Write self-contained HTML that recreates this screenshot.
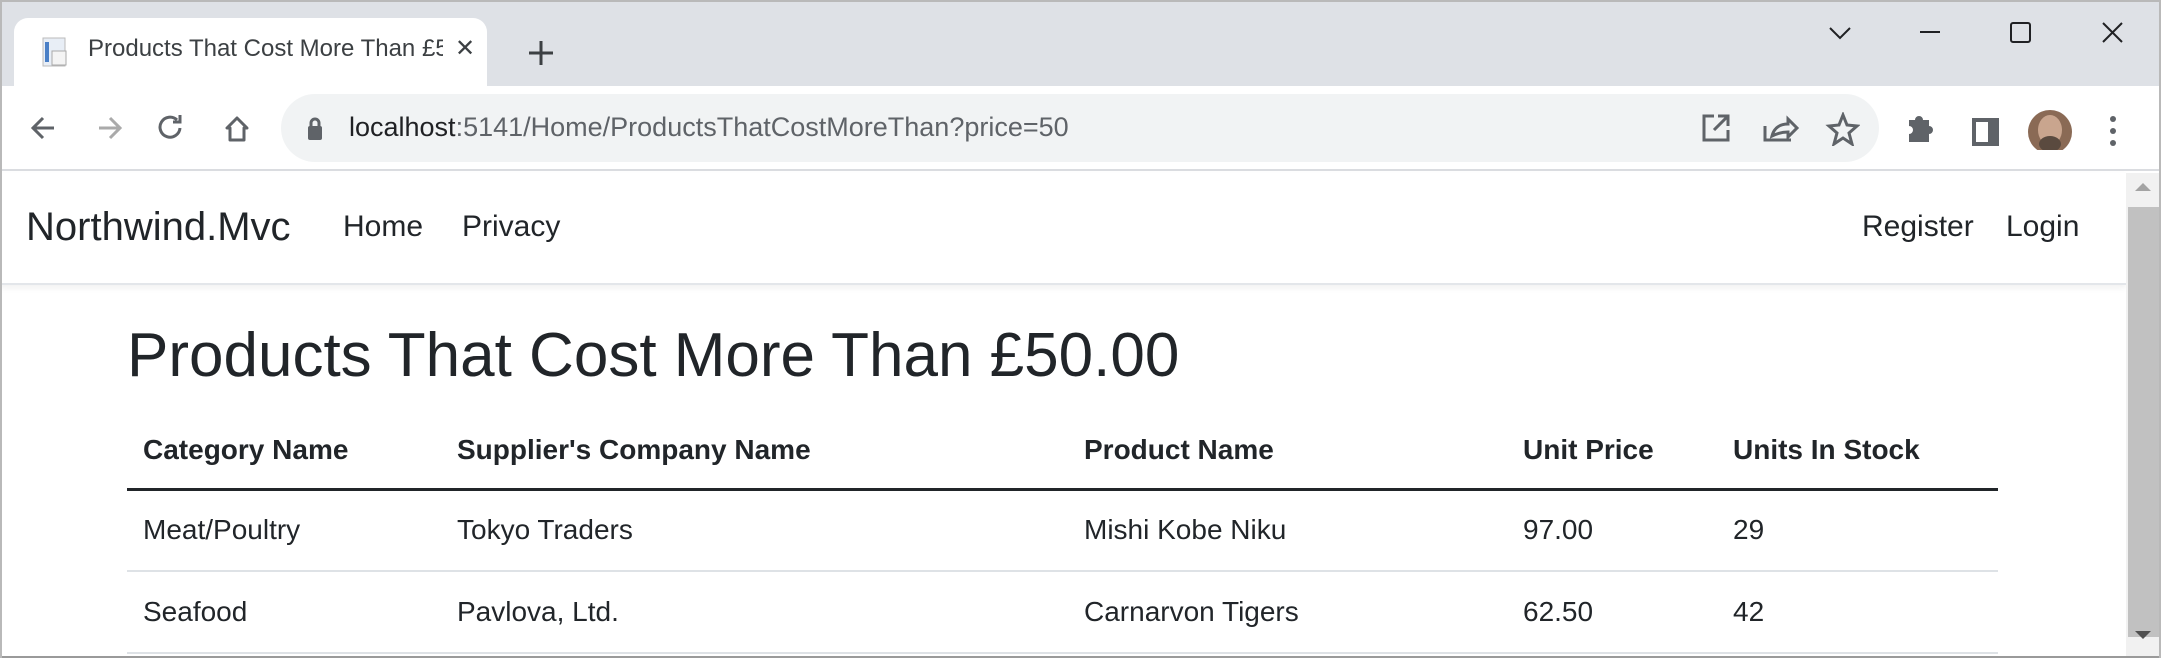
<!DOCTYPE html>
<html><head><meta charset="utf-8"><style>
*{margin:0;padding:0;box-sizing:border-box}
body{width:2161px;height:658px;overflow:hidden;background:#fff;font-family:"Liberation Sans",sans-serif;position:relative;color:#212529}
.abs{position:absolute}
#strip{left:0;top:0;width:2161px;height:86px;background:#dee1e6;border-top:2px solid #b9b9b9}
#tab{left:14px;top:18px;width:473px;height:68px;background:#fff;border-radius:14px 14px 0 0}
#toolbar{left:0;top:86px;width:2161px;height:85px;background:#fff;border-bottom:2px solid #dadce0}
#omni{left:281px;top:94px;width:1598px;height:68px;background:#f1f3f4;border-radius:34px}
#nav{left:0;top:173px;width:2126px;height:112px;background:#fff;border-bottom:2px solid #e3e6ea;box-shadow:0 3px 6px rgba(0,0,0,.06)}
#sb{left:2126px;top:173px;width:35px;height:485px;background:#f1f1f1}
.t{position:absolute;white-space:nowrap}
table{position:absolute;left:127px;top:412px;width:1871px;border-collapse:collapse;font-size:28px}
td,th{text-align:left;padding:0 0 0 16px;height:77px;vertical-align:middle}
th{font-weight:bold;border-bottom:3px solid #212529;height:77px}
td{border-bottom:2px solid #dee2e6;height:82px}
</style></head><body>
<div id="strip" class="abs"></div>
<div id="tab" class="abs"></div>
<svg class="abs" style="left:40px;top:36px" width="32" height="34"><rect x="3" y="2" width="22" height="28" fill="#e8eef6" stroke="#bbb"/><rect x="5" y="6" width="4" height="20" fill="#4a7fc6"/><rect x="12" y="15" width="14" height="14" fill="#f4f4f4" stroke="#aaa"/></svg>
<div class="t" style="left:88px;top:35px;font-size:24px;color:#3c4043;width:355px;overflow:hidden">Products That Cost More Than £5</div>
<div class="t" style="left:455px;top:34px;font-size:24px;color:#3c4043">✕</div>
<svg class="abs" style="left:526px;top:38px" width="30" height="30"><path d="M15 3v24M3 15h24" stroke="#3c4043" stroke-width="3"/></svg>
<svg class="abs" style="left:1820px;top:20px" width="320" height="30" fill="none" stroke="#202124" stroke-width="2"><path d="M10 8l10 10 10-10"/><path d="M100 12h20"/><rect x="191" y="3" width="19" height="19" rx="2"/><path d="M283 3l19 19M302 3l-19 19"/></svg>
<div id="toolbar" class="abs"></div>
<div id="omni" class="abs"></div>
<svg class="abs" style="left:28px;top:112px" width="240" height="32" fill="none" stroke-width="3"><path d="M26 16H6M15 6L5 16l10 10" stroke="#5f6368"/><path d="M71 16h20M82 6l10 10-10 10" stroke="#aaa"/><path d="M149 8a10 10 0 1 0 3 8" stroke="#5f6368"/><path d="M152 3v7h-7" stroke="#5f6368"/><path d="M209 6l-10 10h3v12h14V16h3z" stroke="#5f6368" stroke-linejoin="round"/></svg>
<svg class="abs" style="left:306px;top:116px" width="18" height="26"><rect x="2" y="10" width="14" height="14" rx="2" fill="#5f6368"/><path d="M5 11V7a4 4 0 0 1 8 0v4" stroke="#5f6368" stroke-width="3" fill="none"/></svg>
<div class="t" style="left:349px;top:112px;font-size:27px;color:#5f6368"><span style="color:#202124">localhost</span>:5141/Home/ProductsThatCostMoreThan?price=50</div>
<svg class="abs" style="left:1700px;top:112px" width="160" height="34" fill="none" stroke="#5f6368" stroke-width="3"><path d="M14 4H4v24h24V18M18 4h10v10M28 4L14 18"/><path d="M65 14v14h26M72 24c2-8 8-12 16-12V7l9 9-9 9v-5c-6 0-12 2-16 4z"/><path d="M143 3l4 10 10 1-8 7 3 11-9-6-9 6 3-11-8-7 10-1z"/></svg>
<svg class="abs" style="left:1905px;top:110px" width="180" height="40"><path d="M4 10h6a4 4 0 0 1 8 0h6v6a4 4 0 0 1 0 8v8H4v-8a4 4 0 0 0 0-8z" fill="#5f6368"/><rect x="67" y="8" width="27" height="28" fill="#5f6368"/><rect x="71" y="12" width="12" height="20" fill="#fff"/><circle cx="145" cy="22" r="22" fill="#8a6a55"/><ellipse cx="145" cy="20" rx="12" ry="15" fill="#c9a58e"/><ellipse cx="145" cy="34" rx="11" ry="8" fill="#5a4a3f"/></svg>
<svg class="abs" style="left:2108px;top:114px" width="10" height="34"><circle cx="5" cy="5" r="3" fill="#5f6368"/><circle cx="5" cy="17" r="3" fill="#5f6368"/><circle cx="5" cy="29" r="3" fill="#5f6368"/></svg>
<div id="nav" class="abs"></div>
<div class="t" style="left:26px;top:205px;font-size:40px;color:#212529">Northwind.Mvc</div>
<div class="t" style="left:343px;top:210px;font-size:30px;color:#212529">Home</div>
<div class="t" style="left:462px;top:210px;font-size:30px;color:#212529">Privacy</div>
<div class="t" style="left:1862px;top:210px;font-size:30px;color:#212529">Register</div>
<div class="t" style="left:2006px;top:210px;font-size:30px;color:#212529">Login</div>
<div id="sb" class="abs"></div>
<svg class="abs" style="left:2132px;top:180px" width="22" height="14"><path d="M3 11l8-8 8 8z" fill="#a3a3a3"/></svg>
<div class="abs" style="left:2128px;top:207px;width:31px;height:430px;background:#c1c1c1"></div>
<svg class="abs" style="left:2132px;top:628px" width="22" height="14"><path d="M3 3l8 8 8-8z" fill="#505050"/></svg>
<div class="t" style="left:127px;top:320px;font-size:62px;font-weight:500;color:#212529">Products That Cost More Than £50.00</div>
<table>
<tr><th style="width:314px">Category Name</th><th style="width:627px">Supplier's Company Name</th><th style="width:439px">Product Name</th><th style="width:210px">Unit Price</th><th>Units In Stock</th></tr>
<tr><td>Meat/Poultry</td><td>Tokyo Traders</td><td>Mishi Kobe Niku</td><td>97.00</td><td>29</td></tr>
<tr><td>Seafood</td><td>Pavlova, Ltd.</td><td>Carnarvon Tigers</td><td>62.50</td><td>42</td></tr>
</table>
<div class="abs" style="left:0;top:656px;width:2161px;height:2px;background:#9a9a9a"></div>
<div class="abs" style="left:0;top:0;width:2px;height:658px;background:#b9b9b9"></div>
<div class="abs" style="left:2159px;top:0;width:2px;height:658px;background:#b9b9b9"></div>
</body></html>
